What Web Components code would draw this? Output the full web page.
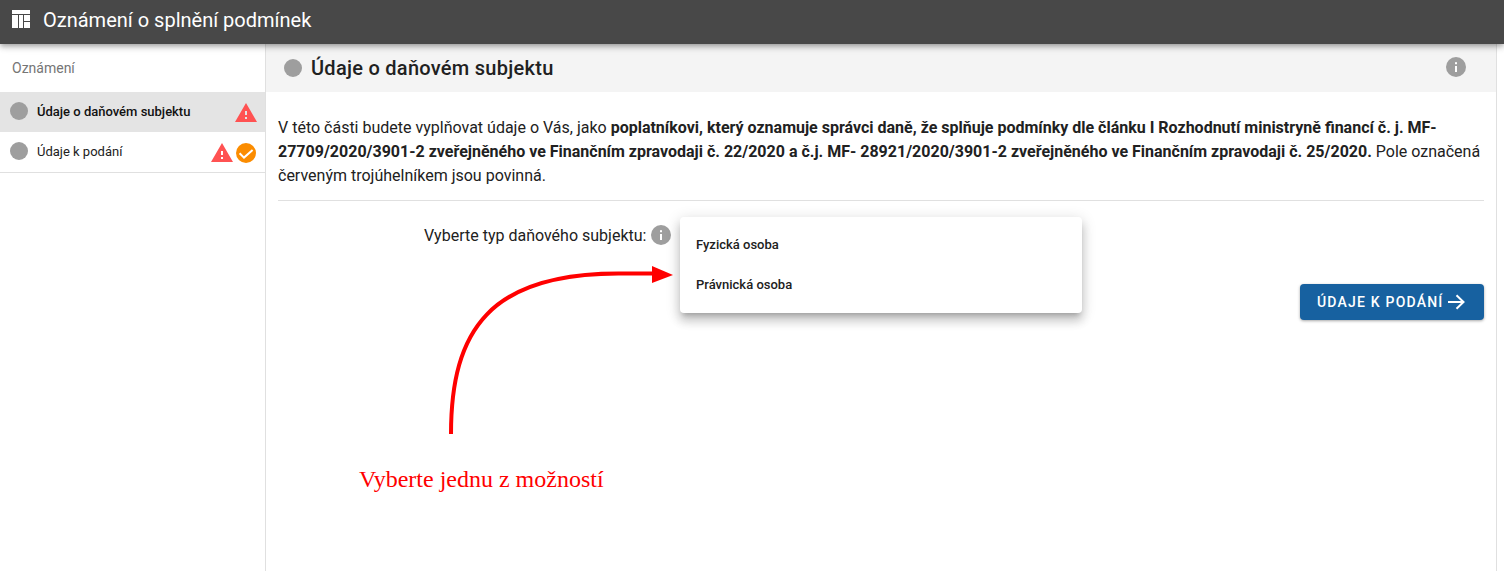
<!DOCTYPE html>
<html lang="cs">
<head>
<meta charset="utf-8">
<title>Oznámení o splnění podmínek</title>
<style>
  html, body { margin: 0; height: 100%; }
  body { font-family: Roboto, "Liberation Sans", sans-serif; color: #212121; background: #fff; overflow: hidden; }
</style>
</head>
<body>
<app-shell>
  <top-bar slot="top">Oznámení o splnění podmínek</top-bar>
  <side-nav slot="side" heading="Oznámení">
    <nav-item active warn>Údaje o daňovém subjektu</nav-item>
    <nav-item warn done>Údaje k podání</nav-item>
  </side-nav>
  <section-panel heading="Údaje o daňovém subjektu">
    <p>V této části budete vyplňovat údaje o Vás, jako <b>poplatníkovi, který oznamuje správci daně, že splňuje podmínky dle článku I Rozhodnutí ministryně financí č. j. MF-27709/2020/3901-2 zveřejněného ve Finančním zpravodaji č. 22/2020 a č.j. MF- 28921/2020/3901-2 zveřejněného ve Finančním zpravodaji č. 25/2020.</b> Pole označená červeným trojúhelníkem jsou povinná.</p>
    <type-select label="Vyberte typ daňového subjektu:">
      <span>Fyzická osoba</span>
      <span>Právnická osoba</span>
    </type-select>
    <next-button>Údaje k podání</next-button>
  </section-panel>
</app-shell>

<script>
const INFO_ICON = `<svg width="20" height="20" viewBox="0 0 20 20"><circle cx="10" cy="10" r="10" fill="#9e9e9e"/><rect x="9" y="9" width="2" height="6" fill="#fff"/><rect x="9" y="5.2" width="2" height="2" fill="#fff"/></svg>`;

class AppShell extends HTMLElement {
  constructor() {
    super();
    const shadow = this.attachShadow({mode: 'open'});
    shadow.innerHTML = `
      <style>
        :host { display: grid; grid-template-rows: 44px 1fr; height: 571px; }
        .body { display: grid; grid-template-columns: 266px 1231px; min-height: 0; }
        ::slotted([slot=top]) { z-index: 2; }
      </style>
      <slot name="top"></slot>
      <div class="body">
        <slot name="side"></slot>
        <slot></slot>
      </div>
    `;
  }
}

class TopBar extends HTMLElement {
  constructor() {
    super();
    const shadow = this.attachShadow({mode: 'open'});
    shadow.innerHTML = `
      <style>
        :host {
          display: flex;
          align-items: center;
          gap: 13px;
          padding-left: 12px;
          padding-bottom: 5px;
          box-sizing: border-box;
          height: 44px;
          background: #484848;
          color: #fff;
          font-size: 20px;
          box-shadow: 0 2px 4px -1px rgba(0,0,0,.2), 0 4px 5px rgba(0,0,0,.14), 0 1px 10px rgba(0,0,0,.12);
        }
        svg { display: block; margin-top: -1px; }
      </style>
      <svg width="18" height="18" viewBox="0 0 18 18" fill="#fff">
        <rect x="0" y="0" width="18" height="4"/>
        <rect x="0" y="5" width="6" height="13"/>
        <rect x="7" y="5" width="4" height="13"/>
        <rect x="12" y="5" width="6" height="6"/>
        <rect x="12" y="12" width="6" height="6"/>
      </svg>
      <slot></slot>
    `;
  }
}

class SideNav extends HTMLElement {
  constructor() {
    super();
    const shadow = this.attachShadow({mode: 'open'});
    shadow.innerHTML = `
      <style>
        :host { display: block; border-right: 1px solid #e0e0e0; background: #fff; }
        .heading { height: 48px; padding-left: 12px; display: flex; align-items: center; font-size: 14px; color: #757575; }
      </style>
      <div class="heading"></div>
      <slot></slot>
    `;
    shadow.querySelector('.heading').textContent = this.getAttribute('heading');
  }
}

class NavItem extends HTMLElement {
  constructor() {
    super();
    const shadow = this.attachShadow({mode: 'open'});
    shadow.innerHTML = `
      <style>
        :host { display: flex; align-items: center; height: 41px; padding: 0 9px 0 10px; font-size: 13px; font-weight: 400; color: #212121; border-bottom: 1px solid #e0e0e0; box-sizing: border-box; }
        :host([active]) { height: 40px; padding-right: 7px; background: #e4e4e4; border-bottom: 0; font-weight: 500; color: #111; }
        .dot { width: 18px; height: 18px; border-radius: 50%; background: #9e9e9e; margin-right: 9px; margin-top: -3px; }
        .label { flex: 1; margin-top: -1px; }
        .icons { display: flex; align-items: center; gap: 2px; margin-top: 2px; }
        svg { display: block; }
      </style>
      <span class="dot"></span>
      <span class="label"><slot></slot></span>
      <span class="icons"></span>
    `;
    let icons = '';
    if (this.hasAttribute('warn')) {
      icons += `<svg width="24" height="24" viewBox="0 0 24 24"><path d="M1 21h22L12 2 1 21zm12-3h-2v-2h2v2zm0-4h-2v-4h2v4z" fill="#ff5252"/></svg>`;
    }
    if (this.hasAttribute('done')) {
      icons += `<svg width="20" height="20" viewBox="0 0 20 20"><circle cx="10" cy="10" r="10" fill="#fb8c00"/><path d="M3.6 10.3 8 14.6 16.6 7" fill="none" stroke="#fff" stroke-width="2"/></svg>`;
    }
    shadow.querySelector('.icons').innerHTML = icons;
  }
}

class SectionPanel extends HTMLElement {
  constructor() {
    super();
    const shadow = this.attachShadow({mode: 'open'});
    shadow.innerHTML = `
      <style>
        :host { display: block; border-right: 1px solid #e0e0e0; }
        header { display: flex; align-items: center; height: 48px; background: #f4f4f4; padding: 0 30px 0 18px; box-sizing: border-box; }
        header .dot { width: 18px; height: 18px; border-radius: 50%; background: #9e9e9e; margin-right: 9px; }
        h2 { flex: 1; margin: 0; font-size: 20px; font-weight: 500; letter-spacing: .27px; color: #212121; }
        svg { display: block; margin-top: -2px; }
        .content { padding: 24px 12px 0; font-size: 16px; line-height: 24px; }
        ::slotted(p) { margin: 0; padding-bottom: 12px; border-bottom: 1px solid #e0e0e0; }
      </style>
      <header>
        <span class="dot"></span>
        <h2></h2>
        ${INFO_ICON}
      </header>
      <div class="content"><slot></slot></div>
    `;
    shadow.querySelector('h2').textContent = this.getAttribute('heading');
  }
}

class TypeSelect extends HTMLElement {
  constructor() {
    super();
    const shadow = this.attachShadow({mode: 'open'});
    shadow.innerHTML = `
      <style>
        :host { display: flex; align-items: center; height: 48px; margin-top: 10px; padding-left: 146px; font-size: 16px; position: relative; }
        .label { margin-right: 5px; padding-top: 1px; }
        svg { display: block; }
        .menu {
          position: absolute;
          left: 402px;
          top: 6px;
          width: 402px;
          height: 96px;
          box-sizing: border-box;
          padding: 8px 0;
          background: #fff;
          border-radius: 4px;
          box-shadow: 0 5px 5px -3px rgba(0,0,0,.2), 0 8px 10px 1px rgba(0,0,0,.14), 0 3px 14px 2px rgba(0,0,0,.12);
          display: grid;
          grid-auto-rows: 40px;
          z-index: 3;
        }
        ::slotted(span) { display: flex; align-items: center; padding: 0 16px; font-size: 13px; font-weight: 500; color: #212121; }
      </style>
      <span class="label"></span>
      ${INFO_ICON}
      <div class="menu"><slot></slot></div>
    `;
    shadow.querySelector('.label').textContent = this.getAttribute('label');
  }
}

class NextButton extends HTMLElement {
  constructor() {
    super();
    const shadow = this.attachShadow({mode: 'open'});
    shadow.innerHTML = `
      <style>
        :host { display: flex; justify-content: flex-end; margin-top: 25px; }
        button {
          display: flex; align-items: center; gap: 4px;
          width: 184px; height: 36px; padding: 0 0 0 17px;
          box-sizing: border-box;
          border: 0; border-radius: 4px;
          background: #1761a0; color: #fff;
          font: 500 14px Roboto, sans-serif;
          letter-spacing: 1.2px;
          text-transform: uppercase;
          box-shadow: 0 1px 3px rgba(0,0,0,.35);
        }
        svg { display: block; }
      </style>
      <button><slot></slot>
        <svg width="18" height="18" viewBox="0 0 18 18" fill="none" stroke="#fff" stroke-width="2"><path d="M0 9H15.5M8.5 2.3 15.5 9 8.5 15.7"/></svg>
      </button>
    `;
  }
}

// the red hand-drawn note lies over the page
class ArrowNote extends HTMLElement {
  constructor() {
    super();
    const shadow = this.attachShadow({mode: 'open'});
    shadow.innerHTML = `
      <style>
        :host { position: absolute; left: 340px; top: 260px; width: 340px; height: 240px; z-index: 4; }
        svg { position: absolute; left: 0; top: 0; }
        span { position: absolute; left: 19px; top: 206px; font: 24px "Liberation Serif", serif; color: #f00; white-space: nowrap; }
      </style>
      <svg width="340" height="240" viewBox="0 0 340 240">
        <path d="M111 174C111 70 150 13 280 13.5H314" fill="none" stroke="#f00" stroke-width="4"/>
        <path d="M312 6 333 15 312 23Z" fill="#f00"/>
      </svg>
      <span><slot></slot></span>
    `;
  }
}

customElements.define('app-shell', AppShell);
customElements.define('top-bar', TopBar);
customElements.define('side-nav', SideNav);
customElements.define('nav-item', NavItem);
customElements.define('section-panel', SectionPanel);
customElements.define('type-select', TypeSelect);
customElements.define('next-button', NextButton);
customElements.define('arrow-note', ArrowNote);

const note = document.createElement('arrow-note');
note.textContent = 'Vyberte jednu z možností';
document.body.appendChild(note);
</script>
</body>
</html>
